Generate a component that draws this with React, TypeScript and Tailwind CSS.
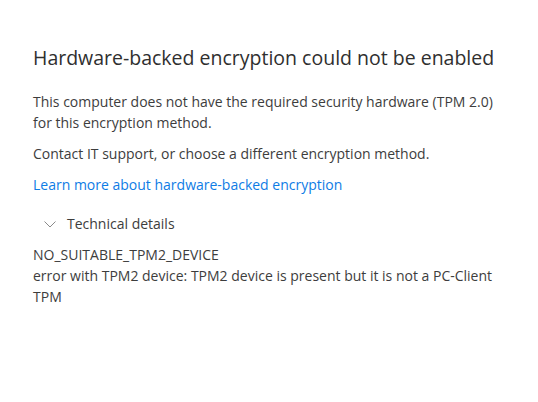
export default function App() {
  return (
    <div className="w-[538px] h-[402px] bg-white text-[#3d3d3d] font-['Open_Sans',sans-serif] px-[33px] pt-[44px]">
      <h1 className="text-[19.5px] leading-[28px] text-[#2f2f2f] whitespace-nowrap">Hardware-backed encryption could not be enabled</h1>
      <p className="mt-[19px] text-[14px] leading-[21px]">
        This computer does not have the required security hardware (TPM 2.0) for this encryption method.
      </p>
      <p className="mt-[10px] text-[14px] leading-[21px]">Contact IT support, or choose a different encryption method.</p>
      <a className="block mt-[10px] text-[14px] leading-[21px] text-[#0e7ce5]">Learn more about hardware-backed encryption</a>
      <div className="mt-[18px] flex items-center text-[14px] leading-[21px]">
        <svg width="14" height="14" viewBox="0 0 14 14" className="ml-[10px] mr-[10px]" fill="none" stroke="#8a8a8a" strokeWidth="1">
          <path d="M1.5 4.5 L7 10 L12.5 4.5" />
        </svg>
        <span>Technical details</span>
      </div>
      <div className="mt-[10px] text-[14px] leading-[21px]">
        <div>NO_SUITABLE_TPM2_DEVICE</div>
        <div>error with TPM2 device: TPM2 device is present but it is not a PC-Client TPM</div>
      </div>
    </div>
  );
}
